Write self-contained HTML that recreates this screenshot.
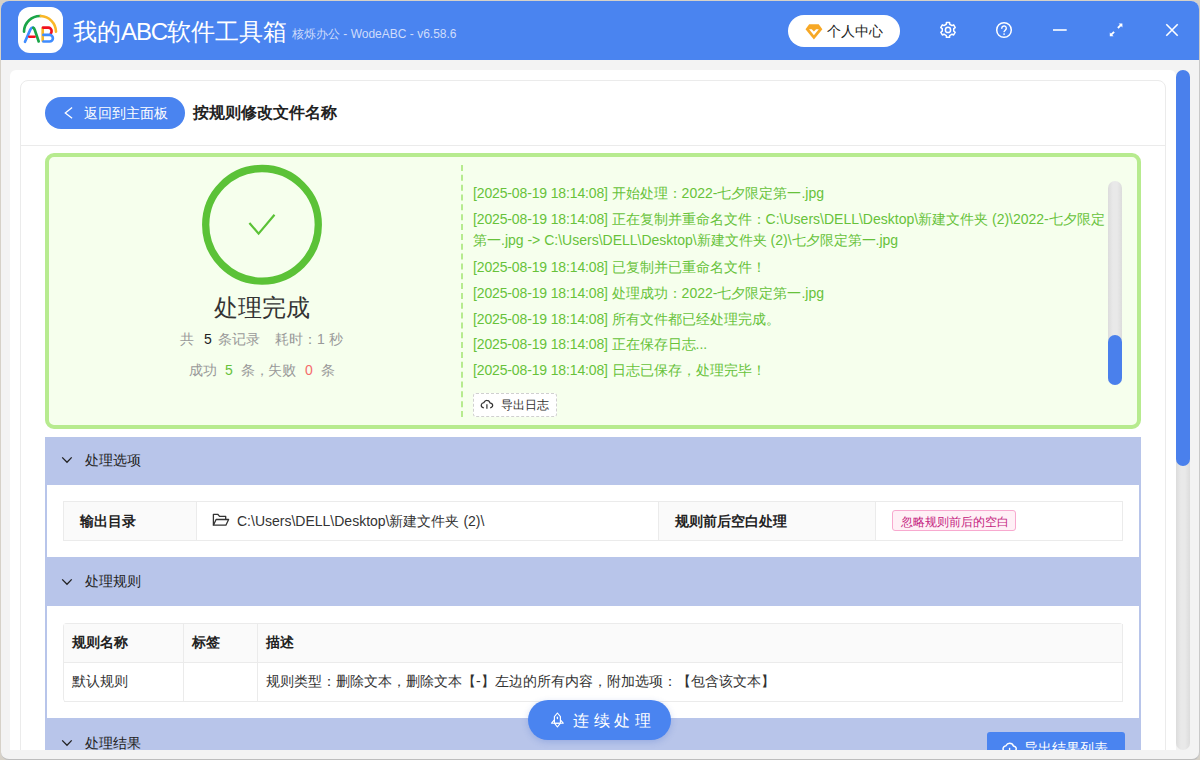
<!DOCTYPE html>
<html><head><meta charset="utf-8">
<style>
*{box-sizing:border-box;margin:0;padding:0}
html,body{width:1200px;height:760px;overflow:hidden;background:#d6d1c8;font-family:"Liberation Sans",sans-serif;color:#333;position:relative}
.a{position:absolute;white-space:nowrap}
#win{position:absolute;left:1px;top:1px;width:1199px;height:759px;background:#f3f3f3;border-radius:8px;border-right:1px solid #c9c9c9;border-bottom:1px solid #bdbdbd;overflow:hidden}
#hdr{position:absolute;left:1px;top:1px;width:1198px;height:59px;background:#4a84f0;border-radius:8px 8px 0 0}
#logo{position:absolute;left:18px;top:7px;width:45px;height:46px;background:#fff;border-radius:12px}
#title{left:73px;top:15px;font-size:24px;color:#fff;line-height:34px}
#sub{left:292px;top:26px;font-size:12px;color:#cfdcfb;line-height:16px}
#ucenter{left:788px;top:15px;width:112px;height:32px;background:#fff;border-radius:16px}
#ucenter span{position:absolute;left:39px;top:8px;font-size:14px;line-height:16px;color:#222}
#card{position:absolute;left:10px;top:70px;width:1166px;height:680px;background:#fff;border-radius:6px 6px 0 0;overflow:hidden}
#panel{position:absolute;left:20px;top:80px;width:1146px;height:700px;border:1px solid #ebebeb;border-radius:8px}
#divider{position:absolute;left:21px;top:145px;width:1144px;height:1px;background:#ebebeb}
#back{left:45px;top:97px;width:140px;height:32px;background:#4a84f0;border-radius:16px}
#back span{position:absolute;left:39px;top:8px;font-size:14px;color:#fff;line-height:16px}
#ptitle{left:193px;top:102px;font-size:16px;font-weight:bold;color:#222;line-height:22px}
#sbar{position:absolute;left:1176px;top:70px;width:14px;height:680px;background:linear-gradient(90deg,#dcdcdc,#e9e9e9 35%,#e9e9e9 65%,#dcdcdc);border-radius:7px}
#sthumb{position:absolute;left:0;top:0;width:14px;height:396px;background:#4a80ec;border-radius:7px}
/* success box */
#ok{position:absolute;left:45px;top:153px;width:1096px;height:276px;background:#f6ffed;border:4px solid #b7eb8f;border-radius:9px}
#dash{position:absolute;left:461px;top:165px;width:0;height:252px;border-left:2px dashed #b7eb8f}
#okt{left:214px;top:293px;font-size:24px;line-height:30px;color:#333}
.stat{font-size:14px;line-height:18px;color:#999}
.ts{letter-spacing:-0.14px}
.log{left:473px;font-size:14px;line-height:23px;color:#67c23a;white-space:nowrap}
#lscroll{position:absolute;left:1108px;top:181px;width:14px;height:204px;background:linear-gradient(90deg,#dcdcdc,#e9e9e9 35%,#e9e9e9 65%,#dcdcdc);border-radius:7px}
#lthumb{position:absolute;left:0;top:154px;width:14px;height:50px;background:#4a80ec;border-radius:7px}
#exlog{left:473px;top:393px;width:84px;height:24px;background:#fff;border:1px dashed #d0d0d0;border-radius:3px}
#exlog span{position:absolute;left:27px;top:4px;font-size:12px;line-height:15px;color:#333}
/* sections */
.sh{position:absolute;left:45px;width:1096px;background:#b8c5ea}
.sh span{position:absolute;left:40px;font-size:14px;line-height:18px;color:#222}
.sc{position:absolute;left:45px;width:1096px;background:#fff;border-left:2px solid #b8c5ea;border-right:2px solid #b8c5ea}
table{border-collapse:separate;border-spacing:0;position:absolute;font-size:14px;color:#333}
td,th{border-right:1px solid #ebebeb;border-bottom:1px solid #ebebeb;text-align:left;font-weight:normal;white-space:nowrap}
#t1{left:63px;top:501px;width:1060px;height:40px;border-top:1px solid #ebebeb;border-left:1px solid #ebebeb}
#t1 .lb{background:#fafafa;font-weight:bold;color:#222}
#t1 td{padding-top:2px}
#tag{left:892px;top:510px;width:124px;height:21px;background:#fff0f6;border:1px solid #f8a9cf;border-radius:3px}
#tag span{position:absolute;left:8px;top:4px;font-size:12px;line-height:15px;color:#c41d7f}
#t2{left:63px;top:623px;width:1060px;border-top:1px solid #ebebeb;border-left:1px solid #ebebeb;border-radius:4px}
#t2 th{background:#fafafa;font-weight:bold;color:#222;height:39px}
#t2 td{height:39px}
#go{left:528px;top:700px;width:143px;height:40px;background:#4a84f0;border-radius:20px;box-shadow:0 2px 6px rgba(60,100,200,.25)}
#go span{position:absolute;left:45px;top:12px;font-size:16px;line-height:18px;color:#fff;letter-spacing:4.5px}
#exres{left:987px;top:732px;width:138px;height:30px;background:#4a84f0;border-radius:3px}
#exres span{position:absolute;left:37px;top:8px;font-size:14px;line-height:16px;color:#fff}
</style></head><body>
<div id="win"></div>
<div id="hdr"></div>
<div id="logo"></div>
<div id="title" class="a">我的<span style="letter-spacing:-1.1px">ABC</span>软件工具箱</div>
<div id="sub" class="a">核烁办公 - WodeABC - v6.58.6</div>
<div id="ucenter" class="a"><span>个人中心</span></div>

<div id="card">
</div>
<div id="panel"></div>
<div id="divider"></div>
<div id="back" class="a"><span>返回到主面板</span></div>
<div id="ptitle" class="a">按规则修改文件名称</div>

<div id="ok"></div>
<div id="dash"></div>
<div id="okt" class="a">处理完成</div>
<div class="a stat" style="left:180px;top:330px">共</div>
<div class="a stat" style="left:204px;top:330px;color:#222">5</div>
<div class="a stat" style="left:218px;top:330px">条记录</div>
<div class="a stat" style="left:275px;top:330px">耗时：</div>
<div class="a stat" style="left:317px;top:330px">1</div>
<div class="a stat" style="left:329px;top:330px">秒</div>
<div class="a stat" style="left:189px;top:361px">成功</div>
<div class="a stat" style="left:225px;top:361px;color:#67c23a">5</div>
<div class="a stat" style="left:241px;top:361px">条，</div>
<div class="a stat" style="left:268px;top:361px">失败</div>
<div class="a stat" style="left:305px;top:361px;color:#f56c6c">0</div>
<div class="a stat" style="left:321px;top:361px">条</div>

<div class="a log" style="top:182px"><span class="ts">[2025-08-19 18:14:08] </span>开始处理：2022-七夕限定第一.jpg</div>
<div class="a log" style="top:208px"><span class="ts">[2025-08-19 18:14:08] </span>正在复制并重命名文件：C:\Users\DELL\Desktop\新建文件夹 (2)\2022-七夕限定</div>
<div class="a log" style="top:229px">第一.jpg -&gt; C:\Users\DELL\Desktop\新建文件夹 (2)\七夕限定第一.jpg</div>
<div class="a log" style="top:256px"><span class="ts">[2025-08-19 18:14:08] </span>已复制并已重命名文件！</div>
<div class="a log" style="top:282px"><span class="ts">[2025-08-19 18:14:08] </span>处理成功：2022-七夕限定第一.jpg</div>
<div class="a log" style="top:308px"><span class="ts">[2025-08-19 18:14:08] </span>所有文件都已经处理完成。</div>
<div class="a log" style="top:333px"><span class="ts">[2025-08-19 18:14:08] </span>正在保存日志...</div>
<div class="a log" style="top:359px"><span class="ts">[2025-08-19 18:14:08] </span>日志已保存，处理完毕！</div>
<div id="lscroll"><div id="lthumb"></div></div>
<div id="exlog" class="a"><span>导出日志</span></div>

<div class="sh" style="top:437px;height:48px"><span style="top:14px">处理选项</span></div>
<div class="sc" style="top:485px;height:72px"></div>
<table id="t1"><tr>
<td class="lb" style="width:133px;padding-left:16px">输出目录</td>
<td style="width:462px;padding-left:40px">C:\Users\DELL\Desktop\新建文件夹 (2)\</td>
<td class="lb" style="width:217px;padding-left:16px">规则前后空白处理</td>
<td></td></tr></table>
<div id="tag" class="a"><span>忽略规则前后的空白</span></div>

<div class="sh" style="top:557px;height:49px"><span style="top:15px">处理规则</span></div>
<div class="sc" style="top:606px;height:112px"></div>
<table id="t2"><tr>
<th style="width:120px;padding-left:8px">规则名称</th>
<th style="width:74px;padding-left:8px">标签</th>
<th style="padding-left:8px">描述</th></tr>
<tr><td style="padding-left:8px">默认规则</td><td></td>
<td style="padding-left:8px">规则类型：删除文本，删除文本【-】左边的所有内容，附加选项：【包含该文本】</td></tr></table>

<div class="sh" style="top:718px;height:32px"><span style="top:16px">处理结果</span></div>
<div id="exres" class="a"><span>导出结果列表</span></div>
<div id="go" class="a"><span>连续处理</span></div>

<svg class="ov" width="1200" height="760" viewBox="0 0 1200 760" style="position:absolute;left:0;top:0" fill="none">
<!-- logo -->
<g stroke-linecap="round" stroke-width="2.65" fill="none">
<path d="M24 31.6 A16 16 0 0 1 40.8 16" stroke="#1aa548"/>
<path d="M40.8 16 A16 16 0 0 1 56 31.6" stroke="#f9b728"/>
<path d="M25 41.8 L30.3 29.6 Q31.6 27.2 33.2 27.8" stroke="#3f8cff"/>
<path d="M33.2 27.8 Q34.2 28.3 34.8 30 L38.7 41.5" stroke="#1aa548"/>
<path d="M29.3 36.7 H34.6" stroke="#f2101d"/>
<path d="M42.7 28.2 V40.8" stroke="#f9b728"/>
<path d="M43 27.6 H48.2 A3.3 3.3 0 0 1 51.6 31 Q51.6 32.4 50.8 33.5" stroke="#f2101d"/>
<path d="M43.4 34.9 H49.6 A3.3 3.3 0 0 1 49.6 41.5 H43.4" stroke="#3f8cff"/>
</g>
<!-- diamond -->
<path d="M809.2 24.2 H818.7 L822.4 29.3 L813.9 39.4 L805.5 29.3 Z" fill="#f7a825"/>
<path d="M809.1 29.2 L813.9 35.3 L818.8 29.2 L816.1 29.2 L813.9 31.6 L811.8 29.2 Z" fill="#fff"/>
<!-- gear -->
<path d="M946.28 24.26 L946.42 22.47 L949.58 22.47 L949.72 24.26 L952.02 25.59 L953.65 24.81 L955.23 27.55 L953.75 28.57 L953.75 31.23 L955.23 32.25 L953.65 34.99 L952.02 34.21 L949.72 35.54 L949.58 37.33 L946.42 37.33 L946.28 35.54 L943.98 34.21 L942.35 34.99 L940.77 32.25 L942.25 31.23 L942.25 28.57 L940.77 27.55 L942.35 24.81 L943.98 25.59Z" stroke="#fff" stroke-width="1.5" stroke-linejoin="round"/>
<circle cx="948" cy="29.9" r="2.6" stroke="#fff" stroke-width="1.5"/>
<!-- help -->
<circle cx="1004" cy="30" r="7.3" stroke="#fff" stroke-width="1.5"/>
<path d="M1001.8 28.3 A2.25 2.25 0 1 1 1005.4 30 L1004.1 31.6" stroke="#fff" stroke-width="1.4" stroke-linecap="round"/>
<rect x="1003.3" y="33.4" width="1.6" height="1.4" fill="#fff"/>
<!-- min -->
<path d="M1053 30 H1066.7" stroke="#fff" stroke-width="1.6"/>
<!-- expand -->
<path d="M1117.9 28 L1121 24.9 M1114.1 31.8 L1111 34.9" stroke="#fff" stroke-width="1.9"/>
<path d="M1118.6 23.6 H1122.4 V27.4 Z M1109.8 32.4 V36.2 H1113.6 Z" fill="#fff"/>
<!-- close -->
<path d="M1166.3 24.3 L1177.7 35.7 M1177.7 24.3 L1166.3 35.7" stroke="#fff" stroke-width="1.6"/>
<!-- back chevron -->
<path d="M72.1 107.5 L65.3 112.9 L72.1 118.3" stroke="#fff" stroke-width="1.3"/>
<!-- check circle -->
<circle cx="262" cy="224.8" r="56.3" stroke="#5bc237" stroke-width="7.3"/>
<path d="M249.4 223 L258.6 233.6 L274.5 214.7" stroke="#5bc237" stroke-width="2.2" stroke-linejoin="miter"/>
<!-- cloud export log -->
<path d="M483.8 407.9 Q481 407.3 481.2 405 Q481.6 402.9 483.8 402.6 Q485 400.3 486.8 400.4 Q489.3 400.4 490 402.9 Q492.6 403.4 492.7 405.3 Q492.6 407.4 490.2 407.8" stroke="#333" stroke-width="1.2"/>
<path d="M486.9 404.3 V408.7" stroke="#333" stroke-width="1.2"/>
<!-- chevrons -->
<path d="M62.2 457.4 L67 462.3 L71.7 457.4" stroke="#222" stroke-width="1.3"/>
<path d="M62.2 579.4 L67 584.3 L71.7 579.4" stroke="#222" stroke-width="1.3"/>
<path d="M62.2 740.4 L67 745.3 L71.7 740.4" stroke="#222" stroke-width="1.3"/>
<!-- folder -->
<path d="M213.4 525.2 V514.3 H217.7 L219.6 516.4 H225.7 V519.4" stroke="#333" stroke-width="1.3" stroke-linejoin="round"/>
<path d="M213.4 525.2 L216.1 519.5 H228.6 L225.9 525.2 Z" stroke="#333" stroke-width="1.3" stroke-linejoin="round"/>
<!-- rocket -->
<path d="M557.4 713 L560.4 716.6 V723.2 H554.4 V716.6 Z" stroke="#fff" stroke-width="1.15" stroke-linejoin="round"/>
<path d="M554.4 719.8 L551.6 723.2 H563.2 L560.4 719.8" stroke="#fff" stroke-width="1.15" stroke-linejoin="round"/>
<path d="M554.6 723.4 L557.4 727 L560.2 723.4" stroke="#fff" stroke-width="1.15" stroke-linejoin="round"/>
<path d="M557.4 717.2 V718.6" stroke="#fff" stroke-width="1.3" stroke-linecap="round"/>
<!-- cloud export results -->
<path d="M1005.5 752 Q1002.8 751.2 1003 748.6 Q1003.4 746.2 1005.8 745.9 Q1007.2 743.3 1009.6 743.3 Q1012.6 743.3 1013.4 746 Q1016.2 746.5 1016.3 748.8 Q1016.2 751.2 1013.6 751.8" stroke="#fff" stroke-width="1.4"/>
<path d="M1009.6 747.8 V753" stroke="#fff" stroke-width="1.4"/>
</svg>
<div style="position:absolute;left:1px;top:750px;width:1199px;height:10px;background:#f3f3f3;border-right:1px solid #c9c9c9;border-bottom:1px solid #bdbdbd;border-radius:0 0 8px 8px"></div>
<div id="sbar"><div id="sthumb"></div></div>
</body></html>
